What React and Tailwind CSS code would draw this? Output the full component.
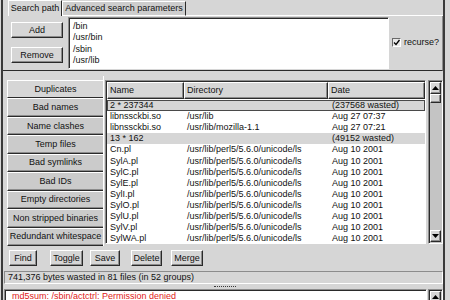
import React from 'react';

// GTK1 style bevels
const raised = 'border border-t-white border-l-white border-b-[#2a2a2a] border-r-[#2a2a2a] shadow-[inset_-1px_-1px_0_#8c8c8c]';
const sunken = 'border border-t-[#8c8c8c] border-l-[#8c8c8c] border-b-white border-r-white shadow-[inset_1px_1px_0_#2a2a2a]';

const tabs = [
  'Duplicates',
  'Bad names',
  'Name clashes',
  'Temp files',
  'Bad symlinks',
  'Bad IDs',
  'Empty directories',
  'Non stripped binaries',
  'Redundant whitespace',
];

const perl = '/usr/lib/perl5/5.6.0/unicode/ls';
const rows = [
  { group: true, focus: true, name: '2 * 237344', dir: '', date: '(237568 wasted)' },
  { name: 'libnssckbi.so', dir: '/usr/lib', date: 'Aug 27 07:37' },
  { name: 'libnssckbi.so', dir: '/usr/lib/mozilla-1.1', date: 'Aug 27 07:21' },
  { group: true, name: '13 * 162', dir: '', date: '(49152 wasted)' },
  { name: 'Cn.pl', dir: perl, date: 'Aug 10 2001' },
  { name: 'SylA.pl', dir: perl, date: 'Aug 10 2001' },
  { name: 'SylC.pl', dir: perl, date: 'Aug 10 2001' },
  { name: 'SylE.pl', dir: perl, date: 'Aug 10 2001' },
  { name: 'SylI.pl', dir: perl, date: 'Aug 10 2001' },
  { name: 'SylO.pl', dir: perl, date: 'Aug 10 2001' },
  { name: 'SylU.pl', dir: perl, date: 'Aug 10 2001' },
  { name: 'SylV.pl', dir: perl, date: 'Aug 10 2001' },
  { name: 'SylWA.pl', dir: perl, date: 'Aug 10 2001' },
];

function Arrow({ down }) {
  return (
    <svg width="7" height="4" viewBox="0 0 7 4">
      <polygon points={down ? '0,0 7,0 3.5,4' : '3.5,0 7,4 0,4'} fill="#000" />
    </svg>
  );
}

function ArrowBtn({ down }) {
  return (
    <div className={`h-[12px] w-[11px] bg-[#d6d6d6] flex items-center justify-center ${raised}`}>
      <Arrow down={down} />
    </div>
  );
}

function Button({ children, className }) {
  return (
    <div className={`h-[16px] flex items-center justify-center bg-[#d6d6d6] ${raised} ${className}`}>
      {children}
    </div>
  );
}

export default function App() {
  return (
    <div className="w-[450px] h-[300px] overflow-hidden bg-[#d6d6d6] text-[9px] leading-none text-[#111] font-['Liberation_Sans',Arial,sans-serif]">
      <div className="ml-[1px] w-[444px] h-full border-l-2 border-r-2 border-l-[#3a3a3a] border-r-[#3a3a3a] flex flex-col">
        {/* top notebook tabs */}
        <div className="h-[16px] flex items-end shrink-0">
          <div className="w-[5px] h-full" />
          <div className="w-[54px] h-[16px] border-l border-t border-r border-l-white border-t-white border-r-[#2a2a2a] flex items-center justify-center whitespace-nowrap">
            Search path
          </div>
          <div className="w-[124px] h-[15px] bg-[#cdcdcd] border-l border-t border-r border-b border-l-white border-t-white border-r-[#2a2a2a] border-b-white flex items-center justify-center whitespace-nowrap">
            Advanced search parameters
          </div>
          <div className="flex-1 h-full border-b border-b-white" />
        </div>

        {/* search path panel */}
        <div className="h-[55px] shrink-0 flex border-b border-b-[#2a2a2a] border-r border-r-[#8c8c8c]">
          <div className="w-[65px] pl-[8px] flex flex-col">
            <Button className="mt-[6px] w-[52px]">Add</Button>
            <Button className="mt-[9px] w-[52px]">Remove</Button>
          </div>
          <div className={`mt-[1px] w-[321px] h-[52px] bg-white pl-[4px] pt-[3px] ${sunken}`}>
            {['/bin', '/usr/bin', '/sbin', '/usr/lib'].map(p => (
              <div key={p} className="h-[11.3px] flex items-center">{p}</div>
            ))}
          </div>
          <div className="flex-1 flex items-center pl-[3px] pb-[1px]">
            <div className="w-[9px] h-[9px] bg-[#e8e8e8] border border-t-[#6a6a6a] border-l-[#6a6a6a] border-b-white border-r-white flex items-center justify-center">
              <svg width="7" height="7" viewBox="0 0 7 7">
                <path d="M1 3.5 L3 5.5 L6.5 1" stroke="#000" strokeWidth="1.3" fill="none" />
              </svg>
            </div>
            <span className="ml-[3px]">recurse?</span>
          </div>
        </div>

        {/* lower notebook with tabs on the left */}
        <div className="mt-[5px] h-[170px] shrink-0 flex">
          <div className="w-[4px]" />
          <div className="w-[96px] flex flex-col pt-[4px]">
            {tabs.map((t, i) => (
              <div
                key={t}
                className={`flex-1 flex items-center justify-center whitespace-nowrap border-t border-l border-b border-t-white border-l-white border-b-[#2a2a2a] ${
                  i === 0 ? 'bg-[#d6d6d6]' : 'bg-[#cbcbcb] shadow-[inset_0_-1px_0_#8c8c8c]'
                }`}
              >
                {t}
              </div>
            ))}
          </div>
          <div className="flex-1 flex border-l border-l-white pl-[1px] pt-[4px] pb-[2px]">
            <div className={`flex-1 bg-white overflow-hidden ${sunken} pl-[1px] pt-[1px]`}>
              <div className="h-[17px] flex">
                <div className={`w-[77px] flex items-center pl-[2px] bg-[#d6d6d6] ${raised}`}>Name</div>
                <div className={`w-[144px] flex items-center pl-[2px] bg-[#d6d6d6] ${raised}`}>Directory</div>
                <div className={`flex-1 flex items-center pl-[2px] bg-[#d6d6d6] ${raised}`}>Date</div>
              </div>
              <div className="pt-[1px]">
                {rows.map((r, i) => (
                  <div
                    key={i}
                    className={`h-[11.1px] flex items-center whitespace-nowrap ${
                      r.group ? 'bg-[#d6d6d6]' : 'bg-white'
                    } ${r.focus ? 'outline outline-1 -outline-offset-1 outline-[#4a4a4a]' : ''}`}
                  >
                    <div className="w-[77px] pl-[3px] overflow-hidden">{r.name}</div>
                    <div className="w-[144px] pl-[3px] overflow-hidden">{r.dir}</div>
                    <div className="flex-1 pl-[4px] overflow-hidden">{r.date}</div>
                  </div>
                ))}
              </div>
            </div>
            {/* scrollbar */}
            <div className={`ml-[2px] w-[15px] bg-[#c4c4c4] flex flex-col ${sunken} p-[1px]`}>
              <ArrowBtn />
              <div className={`h-[9px] w-[11px] bg-[#d6d6d6] ${raised}`} />
              <div className="flex-1" />
              <ArrowBtn down />
            </div>
          </div>
        </div>

        {/* action buttons */}
        <div className="mt-[4px] h-[16px] shrink-0 flex">
          <Button className="ml-[6px] w-[28px]">Find</Button>
          <Button className="ml-[13px] w-[33px]">Toggle</Button>
          <Button className="ml-[7px] w-[30px]">Save</Button>
          <Button className="ml-[11px] w-[31px]">Delete</Button>
          <Button className="ml-[9px] w-[32px]">Merge</Button>
        </div>

        {/* status bar */}
        <div className={`mt-[5px] ml-[1px] h-[13px] shrink-0 flex items-center pl-[3px] whitespace-nowrap ${sunken} shadow-none`}>
          741,376 bytes wasted in 81 files (in 52 groups)
        </div>

        {/* pane separator */}
        <div className="h-[5px] shrink-0 flex items-center justify-center">
          <div className="ml-[4px] w-[22px] h-[1px] border-t border-dotted border-[#3a3a3a]" />
        </div>

        {/* error output */}
        <div className="flex-1 flex ml-[1px]">
          <div className={`flex-1 bg-white pl-[7px] pt-[2px] text-[#e01818] whitespace-nowrap ${sunken}`}>
            md5sum: /sbin/actctrl: Permission denied
          </div>
          <div className={`ml-[1px] w-[15px] bg-[#c4c4c4] ${sunken} p-[1px]`}>
            <ArrowBtn />
          </div>
        </div>
      </div>
    </div>
  );
}
